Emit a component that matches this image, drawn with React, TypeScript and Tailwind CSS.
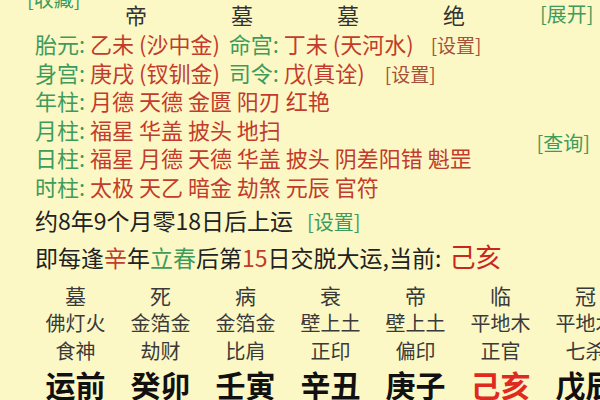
import React from 'react'

const G = 'text-[#3f9b5c]'
const R = 'text-[#c23b2c]'
const B = 'text-[#a4513c]'

const pillars = [
    { label: '年柱', items: ['月德', '天德', '金匮', '阳刃', '红艳'] },
    { label: '月柱', items: ['福星', '华盖', '披头', '地扫'] },
    { label: '日柱', items: ['福星', '月德', '天德', '华盖', '披头', '阴差阳错', '魁罡'] },
    { label: '时柱', items: ['太极', '天乙', '暗金', '劫煞', '元辰', '官符'] },
]

const luck = [
    { stage: '墓', nayin: '佛灯火', god: '食神', gz: '运前' },
    { stage: '死', nayin: '金箔金', god: '劫财', gz: '癸卯' },
    { stage: '病', nayin: '金箔金', god: '比肩', gz: '壬寅' },
    { stage: '衰', nayin: '壁上土', god: '正印', gz: '辛丑' },
    { stage: '帝', nayin: '壁上土', god: '偏印', gz: '庚子' },
    { stage: '临', nayin: '平地木', god: '正官', gz: '己亥', current: true },
    { stage: '冠', nayin: '平地木', god: '七杀', gz: '戊辰' },
]

function PillarLine({ label, items }: { label: string; items: string[] }) {
    return (
        <div className="whitespace-nowrap">
            <span className={G}>{label}: </span>
            <span className={R}>{items.join(' ')}</span>
        </div>
    )
}

export default function App() {
    return (
        <div className="w-[600px] h-[400px] overflow-hidden bg-[#fcf8c5] text-[22px] leading-[28.6px] text-[#333] font-['Noto_Sans_CJK_SC',sans-serif]">
            {/* stage header */}
            <div className="flex items-start h-[28px] leading-[28px]">
                <span className={`w-[83px] pl-[27px] -mt-[15px] text-[20px] whitespace-nowrap ${G}`}>[收藏]</span>
                <div className="grid grid-cols-[repeat(4,106px)] text-center">
                    <span>帝</span>
                    <span>墓</span>
                    <span>墓</span>
                    <span>绝</span>
                </div>
                <span className={`ml-[33px] text-[20px] whitespace-nowrap ${G}`}>[展开]</span>
            </div>

            <div className="pl-[35px] mt-[1px]">
                <div className="whitespace-nowrap">
                    <span className={G}>胎元: </span>
                    <span className={R}>乙未 (沙中金) </span>
                    <span className={`ml-[4px] ${G}`}>命宫: </span>
                    <span className={R}>丁未 (天河水)</span>
                    <span className={`ml-[17px] text-[19px] leading-none ${B}`}>[设置]</span>
                </div>
                <div className="whitespace-nowrap">
                    <span className={G}>身宫: </span>
                    <span className={R}>庚戌 (钗钏金) </span>
                    <span className={`ml-[4px] ${G}`}>司令: </span>
                    <span className={R}>戊(真诠)</span>
                    <span className={`ml-[20px] text-[19px] leading-none ${B}`}>[设置]</span>
                </div>
                <PillarLine {...pillars[0]} />
                <div className="flex items-center pr-[10px]">
                    <div>
                        <PillarLine {...pillars[1]} />
                        <PillarLine {...pillars[2]} />
                    </div>
                    <span className={`ml-auto text-[20px] whitespace-nowrap ${G}`}>[查询]</span>
                </div>
                <PillarLine {...pillars[3]} />

                <div className="mt-[5px] text-[23px] leading-[28px] whitespace-nowrap text-[#222]">
                    约8年9个月零18日后上运
                    <span className={`ml-[14px] text-[20px] leading-none ${G}`}>[设置]</span>
                </div>
                <div className="mt-[8px] text-[23px] leading-[30px] whitespace-nowrap text-[#222]">
                    即每逢<span className={R}>辛</span>年<span className={G}>立春</span>后第<span className={R}>15</span>日交脱大运,当前:{' '}
                    <span className="ml-[3px] text-[26px] leading-none text-[#c8271e]">己亥</span>
                </div>
            </div>

            <div className="mt-[9px] pl-[33px] grid grid-cols-[repeat(7,85px)] text-center whitespace-nowrap">
                {luck.map((l) => (
                    <div key={l.gz} className="flex flex-col">
                        <span className="leading-[28px] text-[21px] text-[#3a3a3a]">{l.stage}</span>
                        <span className="leading-[28px] text-[20px] text-[#3a3a3a]">{l.nayin}</span>
                        <span className="leading-[28px] text-[20px] text-[#3a3a3a]">{l.god}</span>
                        <span className={`mt-[2px] leading-[34px] text-[30px] font-bold ${l.current ? 'text-[#e02a1f]' : 'text-[#111]'}`}>{l.gz}</span>
                    </div>
                ))}
            </div>
        </div>
    )
}
